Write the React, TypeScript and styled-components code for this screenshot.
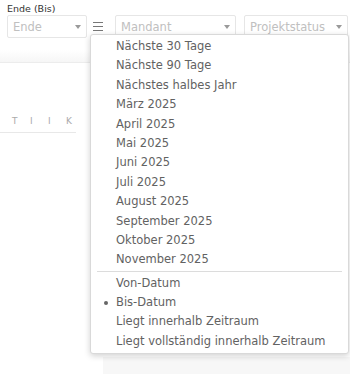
import styled, { createGlobalStyle } from "styled-components";

const GlobalStyle = createGlobalStyle`
  html, body {
    margin: 0;
    padding: 0;
    background: #fff;
  }
  body {
    font-family: "DejaVu Sans", "Open Sans", sans-serif;
  }
`;

const Page = styled.div`
  position: relative;
  width: 350px;
  height: 374px;
  overflow: hidden;
  background: #fff;
`;

const FilterRow = styled.div`
  display: flex;
  align-items: flex-end;
  padding: 3px 0 0 7px;
`;

const Field = styled.div<{ $width: number; $gap?: number }>`
  display: flex;
  flex-direction: column;
  width: ${(p) => p.$width}px;
  margin-left: ${(p) => p.$gap ?? 0}px;
  flex-shrink: 0;
`;

const Label = styled.div`
  font-size: 9.5px;
  line-height: 12px;
  color: #333;
  height: 12px;
  white-space: nowrap;
`;

const Select = styled.div`
  display: flex;
  align-items: center;
  justify-content: space-between;
  height: 21px;
  border: 1px solid #e6e6e6;
  border-radius: 2px;
  padding: 0 5px;
  font-size: 11.5px;
  color: #c0c0c0;
  white-space: nowrap;
`;

const Caret = styled.span`
  width: 0;
  height: 0;
  border-left: 3.5px solid transparent;
  border-right: 3.5px solid transparent;
  border-top: 4px solid #9a9a9a;
  margin-top: 1px;
`;

const MenuButton = styled.div`
  display: flex;
  flex-direction: column;
  gap: 3px;
  width: 10px;
  height: 23px;
  justify-content: center;
  margin-left: 6px;
  flex-shrink: 0;

  span {
    display: block;
    height: 1.2px;
    background: #777;
  }
`;

const Content = styled.div`
  margin-top: 12px;
`;

const HeaderBand = styled.div`
  height: 12px;
  background: linear-gradient(#fff, #f6f6f6);
  border-bottom: 1px solid #ececec;
`;

const Tabs = styled.div`
  display: flex;
  gap: 10px;
  width: 64px;
  margin-top: 53px;
  padding: 0 0 6px 12px;
  border-bottom: 1px solid #e8e8e8;
`;

const Tab = styled.span`
  font-size: 9px;
  color: #aaa;
  width: 8px;
`;

const BottomPanel = styled.div`
  position: absolute;
  left: 103px;
  top: 357px;
  right: 0;
  bottom: 0;
  background: #f7f7f7;
`;

const Menu = styled.div`
  position: absolute;
  left: 90px;
  top: 34px;
  width: 257px;
  padding: 2px 0 2px;
  background: #fff;
  border: 1px solid #d9d9d9;
  border-radius: 3px;
  box-shadow: 0 2px 6px rgba(0, 0, 0, 0.18);
`;

const Item = styled.div<{ $checked?: boolean }>`
  position: relative;
  height: 19.4px;
  line-height: 19.4px;
  padding-left: 25px;
  font-size: 11.5px;
  color: #626262;
  white-space: nowrap;

  &::before {
    content: "";
    display: ${(p) => (p.$checked ? "block" : "none")};
    position: absolute;
    left: 13px;
    top: 8px;
    width: 4px;
    height: 4px;
    border-radius: 50%;
    background: #666;
  }
`;

const Divider = styled.div`
  height: 1px;
  background: #dcdcdc;
  margin: 1px 6px 2px;
`;

const ranges = [
  "Nächste 30 Tage",
  "Nächste 90 Tage",
  "Nächstes halbes Jahr",
  "März 2025",
  "April 2025",
  "Mai 2025",
  "Juni 2025",
  "Juli 2025",
  "August 2025",
  "September 2025",
  "Oktober 2025",
  "November 2025",
];

const modes = [
  { label: "Von-Datum" },
  { label: "Bis-Datum", checked: true },
  { label: "Liegt innerhalb Zeitraum" },
  { label: "Liegt vollständig innerhalb Zeitraum" },
];

export default function App() {
  return (
    <Page>
      <GlobalStyle />
      <FilterRow>
        <Field $width={80}>
          <Label>Ende (Bis)</Label>
          <Select>
            Ende
            <Caret />
          </Select>
        </Field>
        <MenuButton>
          <span />
          <span />
          <span />
        </MenuButton>
        <Field $width={121} $gap={12}>
          <Select>
            Mandant
            <Caret />
          </Select>
        </Field>
        <Field $width={104} $gap={8}>
          <Select>
            Projektstatus
            <Caret />
          </Select>
        </Field>
      </FilterRow>

      <Content>
        <HeaderBand />
        <Tabs>
          <Tab>T</Tab>
          <Tab>I</Tab>
          <Tab>I</Tab>
          <Tab>K</Tab>
        </Tabs>
      </Content>

      <BottomPanel />

      <Menu>
        {ranges.map((r) => (
          <Item key={r}>{r}</Item>
        ))}
        <Divider />
        {modes.map((m) => (
          <Item key={m.label} $checked={m.checked}>
            {m.label}
          </Item>
        ))}
      </Menu>
    </Page>
  );
}
